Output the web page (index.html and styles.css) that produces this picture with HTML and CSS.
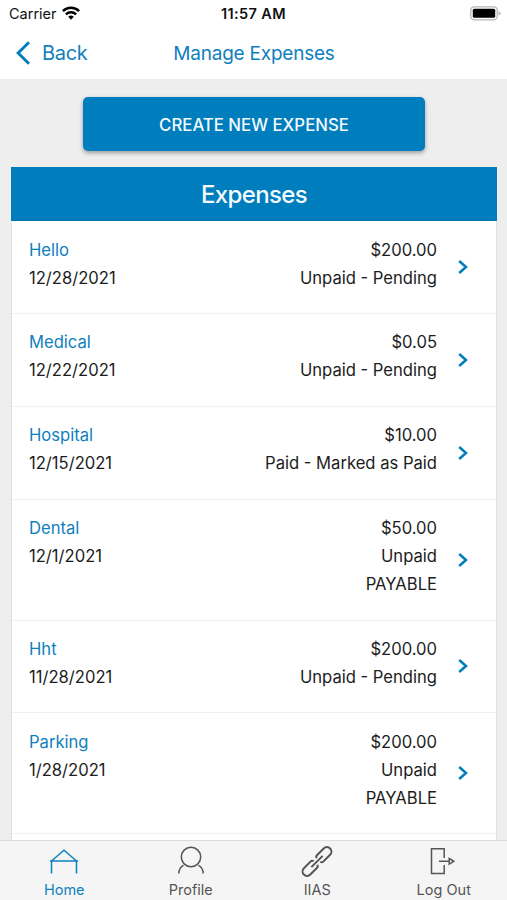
FILE: index.html
```
<!DOCTYPE html>
<html lang="en">
<head>
<meta charset="utf-8">
<title>Manage Expenses</title>
<link rel="stylesheet" href="styles.css">
</head>
<body>
<div class="app">
  <div class="status">
    <div class="carrier"><span>Carrier</span>
      <svg width="18" height="14" viewBox="0 0 18 14" fill="none" stroke="#000" stroke-width="2.5"><path d="M.9 5.1a11.5 11.5 0 0 1 16.2 0M3.9 8.3a7.2 7.2 0 0 1 10.2 0"/><path d="M9 13.7 6.2 10.8a4 4 0 0 1 5.6 0z" fill="#000" stroke="none"/></svg>
    </div>
    <div class="time">11:57 AM</div>
    <svg class="battery" width="31" height="15" viewBox="0 0 31 15"><rect x=".8" y=".8" width="26.4" height="13" rx="3.5" fill="#fff" stroke="#b5b5b5" stroke-width="1.3"/><rect x="2.8" y="2.8" width="22.4" height="9" rx="1.5"/><path d="M28.6 5v4.6q2-.7 2-2.3t-2-2.3" fill="#b5b5b5"/></svg>
  </div>
  <header class="nav">
    <a class="back"><svg width="15" height="24" viewBox="0 0 15 24" fill="none" stroke="#007dbc" stroke-width="2.9"><path d="M14 1.3 3.1 12 14 22.7"/></svg><span>Back</span></a>
    <h1>Manage Expenses</h1>
  </header>
  <main class="content">
    <button class="create"><span>CREATE NEW EXPENSE</span></button>
    <section class="panel">
      <h2><span>Expenses</span></h2>
      <div class="list">
        <div class="row"><div class="left"><b>Hello</b><span>12/28/2021</span></div><div class="right"><span>$200.00</span><span>Unpaid - Pending</span></div><svg class="chev" viewBox="0 0 10 14"><path d="M1.2 1 8 7l-6.8 6"/></svg></div>
        <div class="row"><div class="left"><b>Medical</b><span>12/22/2021</span></div><div class="right"><span>$0.05</span><span>Unpaid - Pending</span></div><svg class="chev" viewBox="0 0 10 14"><path d="M1.2 1 8 7l-6.8 6"/></svg></div>
        <div class="row"><div class="left"><b>Hospital</b><span>12/15/2021</span></div><div class="right"><span>$10.00</span><span>Paid - Marked as Paid</span></div><svg class="chev" viewBox="0 0 10 14"><path d="M1.2 1 8 7l-6.8 6"/></svg></div>
        <div class="row"><div class="left"><b>Dental</b><span>12/1/2021</span></div><div class="right"><span>$50.00</span><span>Unpaid</span><span class="payable">PAYABLE</span></div><svg class="chev" viewBox="0 0 10 14"><path d="M1.2 1 8 7l-6.8 6"/></svg></div>
        <div class="row"><div class="left"><b>Hht</b><span>11/28/2021</span></div><div class="right"><span>$200.00</span><span>Unpaid - Pending</span></div><svg class="chev" viewBox="0 0 10 14"><path d="M1.2 1 8 7l-6.8 6"/></svg></div>
        <div class="row"><div class="left"><b>Parking</b><span>1/28/2021</span></div><div class="right"><span>$200.00</span><span>Unpaid</span><span class="payable">PAYABLE</span></div><svg class="chev" viewBox="0 0 10 14"><path d="M1.2 1 8 7l-6.8 6"/></svg></div>
      </div>
    </section>
  </main>
  <nav class="tabs">
    <a class="tab active"><svg width="32" height="32" viewBox="0 0 32 32"><path d="M3.5 28.5V16L16 5.3 28.5 16v12.5M2 16h28"/></svg><span>Home</span></a>
    <a class="tab profile"><svg width="32" height="32" viewBox="0 0 32 32"><circle cx="16" cy="12" r="9.7"/><path d="M3.8 28.500c0-3.600 1.600-6.500 4.700-8.200M28.200 28.500c0-3.600-1.600-6.500-4.700-8.200"/></svg><span>Profile</span></a>
    <a class="tab iias"><svg width="32" height="32" viewBox="0 0 32 32"><g transform="rotate(-45 16 16.5)"><path d="M13.800 14q-.3-2-2.500-2H2a4.500 4.500 0 0 0 0 9h9.300q2.200 0 2.500-2M18.200 14q.3-2 2.500-2H30a4.500 4.500 0 0 1 0 9h-9.300q-2.200 0-2.500-2M8 16.500h16"/></g></svg><span>IIAS</span></a>
    <a class="tab logout"><svg width="32" height="32" viewBox="0 0 32 32"><path d="M17.200 13V3.800H4.500v24.700h12.700V20M12 16.300h10.200M22.200 13.500l4.600 2.800-4.600 2.800z"/></svg><span>Log Out</span></a>
  </nav>
</div>
</body>
</html>
```
FILE: styles.css
```
* { box-sizing: border-box; }
body { margin: 0; font-family: Inter, "Liberation Sans", sans-serif; color: #1c1c1c; }
.app { width: 507px; height: 900px; overflow: hidden; display: flex; flex-direction: column; background: #eee; }
.status { height: 27px; flex: none; display: grid; grid-template-columns: 1fr auto 1fr; align-items: center; padding: 0 6px 0 9px; background: #fff; font-size: 14.5px; color: #111; }
.carrier { display: flex; align-items: center; gap: 6px; }
.carrier svg { margin: -2px 0 0 -1px; }
.time { font-weight: 600; letter-spacing: .4px; margin-left: -3px; }
.battery { justify-self: end; margin-top: -1px; }
.nav { height: 52px; flex: none; display: grid; grid-template-columns: 1fr auto 1fr; align-items: center; background: #fff; padding: 0 14px 1px 15px; color: #0f80bd; }
.back { display: flex; align-items: center; gap: 12px; font-size: 20px; letter-spacing: -.3px; }
.nav h1 { margin: 0; padding-top: 2px; font-weight: 400; font-size: 19px; letter-spacing: -.22px; }
.content { flex: 1; min-height: 0; overflow: hidden; padding: 18px 10px 0 11px; }
.create { display: flex; align-items: center; justify-content: center; width: 342px; height: 54px; margin: 0 0 0 72px; padding: 2px 0 0; border: 0; border-radius: 5px; background: #007dbc; color: #f4faff; font: 500 16.8px Inter, sans-serif; box-shadow: 0 2px 4px rgba(0,0,0,.35); }
.panel { margin-top: 16px; }
.panel h2 { margin: 0; height: 54px; display: flex; align-items: center; justify-content: center; background: #007dbc; color: #f4faff; font-weight: 500; font-size: 24px; letter-spacing: -.65px; }
.list { background: #fff; margin: 0 1px; padding-top: .4px; box-shadow: 0 0 2px rgba(0,0,0,.15); height: 640px; }
.row { display: flex; align-items: center; padding: 14.3px 28px 21.5px 17px; border-bottom: 1px solid #f1f1f1; font-size: 16.6px; line-height: 28px; }
.left, .right { display: flex; flex-direction: column; }
.left { align-self: flex-start; }
.left b { font-weight: 400; color: #0f80bd; }
.right { margin-left: auto; text-align: right; }
.chev { width: 10px; height: 14px; margin: 7px 0 0 21px; fill: none; stroke: #007dbc; stroke-width: 2.5; }
.tabs { height: 60px; flex: none; display: flex; background: #f5f5f5; border-top: 1px solid #dcdcdc; padding-left: 1px; }
.tab { flex: 1; display: flex; flex-direction: column; align-items: center; padding-top: 4px; font-size: 14.5px; line-height: 18px; color: #555; }
.tab svg { fill: none; stroke: currentColor; stroke-width: 1.5; overflow: visible; }
.iias svg { stroke-width: 2; }
.logout svg { margin-left: -1px; }
.tab span { margin-top: 4px; }
.active { color: #0f80bd; }
```
